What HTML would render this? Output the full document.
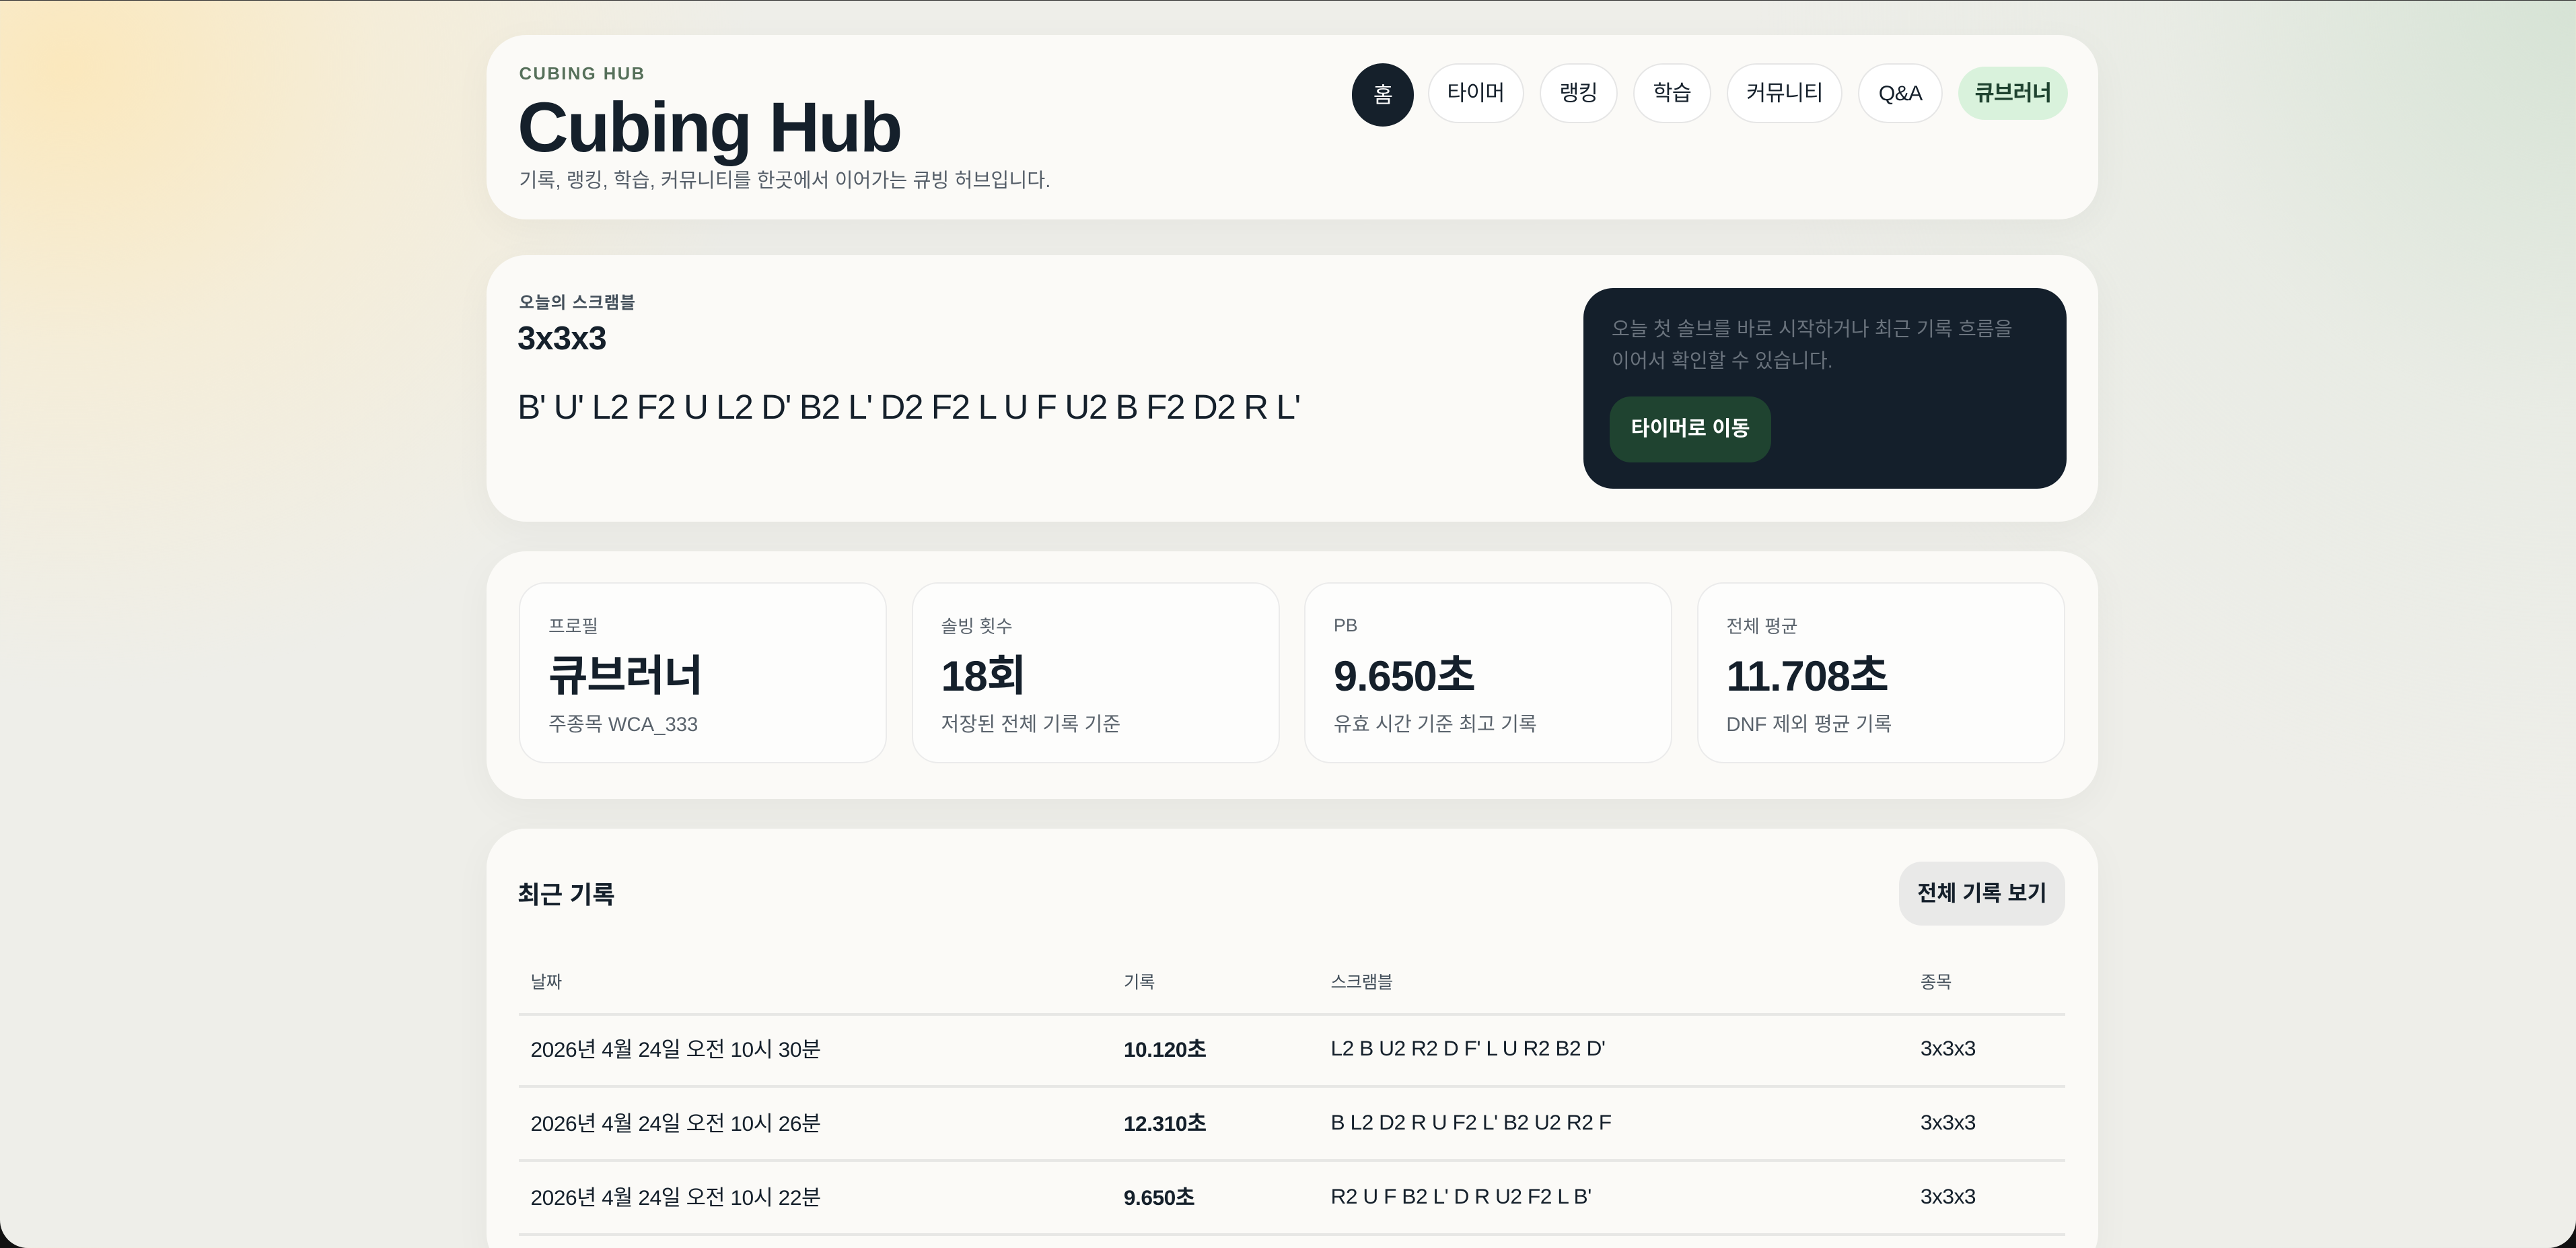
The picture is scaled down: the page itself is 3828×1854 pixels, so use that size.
<!DOCTYPE html>
<html><head><meta charset="utf-8"><style>
html,body{margin:0;padding:0;}
body{width:3828px;height:1854px;overflow:hidden;background:#111;}
#z{zoom:2.44133;width:1568px;height:759.5px;position:relative;overflow:hidden;border-radius:0 0 17px 17px;border-top:0.5px solid #333;box-sizing:border-box;
background:radial-gradient(ellipse 420px 380px at 40px 40px,#fbe8bd 0%,rgba(251,236,200,.5) 45%,rgba(240,240,234,0) 100%),radial-gradient(ellipse 500px 500px at 1568px 0px,#d6e3d5 0%,rgba(225,232,222,.4) 50%,rgba(238,238,233,0) 100%),#eeeee9;
font-family:"Liberation Sans","Noto Sans CJK KR",sans-serif;color:#15202b;}
.card{position:absolute;left:296px;width:981px;background:#fbfaf7;border-radius:24px;box-shadow:0 6px 24px rgba(0,0,0,.04);}
.a{position:absolute;white-space:nowrap;}
.pill{position:absolute;top:17px;height:35px;border:1px solid #e6e6e6;border-radius:20px;background:#fff;font-size:13px;line-height:35px;text-align:center;letter-spacing:-0.3px;}
.st{position:absolute;top:19px;width:224px;height:110px;border:1px solid #ebebeb;border-radius:16px;background:#fdfdfc;box-sizing:border-box;}
.st .l{position:absolute;left:17px;top:17px;font-size:11px;color:#5a636c;}
.st .v{position:absolute;left:17px;top:35px;font-size:26px;font-weight:bold;letter-spacing:-0.5px;}
.st .s{position:absolute;left:17px;top:76px;font-size:12px;color:#5a636c;}
.hl{position:absolute;left:20px;right:20px;height:1.5px;background:#e7e7e5;}
.r{position:absolute;font-size:13px;letter-spacing:-0.2px;}
</style></head><body><div id="z">
<div class="card" style="top:21px;height:112px;">
 <div class="a" style="left:20px;top:18px;font-size:10.5px;font-weight:bold;letter-spacing:1px;color:#56705a;">CUBING HUB</div>
 <div class="a" style="left:19px;top:32px;font-size:43px;font-weight:bold;letter-spacing:-1px;">Cubing Hub</div>
 <div class="a" style="left:20px;top:79px;font-size:12px;color:#555e68;">기록, 랭킹, 학습, 커뮤니티를 한곳에서 이어가는 큐빙 허브입니다.</div>
 <div class="pill" style="left:527px;width:36px;height:37px;background:#15202b;border-color:#15202b;color:#fff;line-height:37px;">홈</div>
 <div class="pill" style="left:573px;width:57px;">타이머</div>
 <div class="pill" style="left:641px;width:46px;">랭킹</div>
 <div class="pill" style="left:698px;width:46px;">학습</div>
 <div class="pill" style="left:755px;width:69px;">커뮤니티</div>
 <div class="pill" style="left:835px;width:50px;">Q&amp;A</div>
 <div class="pill" style="left:896px;width:65px;top:19px;height:31px;line-height:31px;background:#d9f2dc;border-color:#d9f2dc;color:#1f4330;font-weight:bold;">큐브러너</div>
</div>
<div class="card" style="top:155px;height:162px;">
 <div class="a" style="left:20px;top:21px;font-size:10px;font-weight:bold;letter-spacing:0.5px;color:#44505b;">오늘의 스크램블</div>
 <div class="a" style="left:19px;top:39px;font-size:20px;font-weight:bold;letter-spacing:-0.3px;">3x3x3</div>
 <div class="a" style="left:19px;top:80px;font-size:21px;letter-spacing:-0.6px;">B' U' L2 F2 U L2 D' B2 L' D2 F2 L U F U2 B F2 D2 R L'</div>
 <div style="position:absolute;left:668px;top:20px;width:294px;height:122px;background:#141f2b;border-radius:18px;">
  <div class="a" style="left:17px;top:16px;font-size:12px;line-height:19px;color:#6a737d;white-space:normal;width:250px;">오늘 첫 솔브를 바로 시작하거나 최근 기록 흐름을 이어서 확인할 수 있습니다.</div>
  <div style="position:absolute;left:16px;top:66px;width:98px;height:40px;background:#1f4330;border-radius:13px;color:#fff;font-weight:bold;font-size:12.5px;line-height:40px;text-align:center;">타이머로 이동</div>
 </div>
</div>
<div class="card" style="top:335px;height:151px;">
 <div class="st" style="left:20px;"><div class="l">프로필</div><div class="v">큐브러너</div><div class="s">주종목 WCA_333</div></div>
 <div class="st" style="left:259px;"><div class="l">솔빙 횟수</div><div class="v">18회</div><div class="s">저장된 전체 기록 기준</div></div>
 <div class="st" style="left:498px;"><div class="l" style="top:19px">PB</div><div class="v">9.650초</div><div class="s">유효 시간 기준 최고 기록</div></div>
 <div class="st" style="left:737px;"><div class="l">전체 평균</div><div class="v">11.708초</div><div class="s">DNF 제외 평균 기록</div></div>
</div>
<div class="card" style="top:504px;height:270px;">
 <div class="a" style="left:19px;top:28px;font-size:15px;font-weight:bold;">최근 기록</div>
 <div style="position:absolute;left:860px;top:20px;width:101px;height:39px;background:#e9e9e8;border-radius:14px;font-size:13px;font-weight:bold;line-height:39px;text-align:center;">전체 기록 보기</div>
 <div class="r" style="left:27px;top:85px;font-size:10.5px;color:#44505b;">날짜</div>
 <div class="r" style="left:388px;top:85px;font-size:10.5px;color:#44505b;">기록</div>
 <div class="r" style="left:514px;top:85px;font-size:10.5px;color:#44505b;">스크램블</div>
 <div class="r" style="left:873px;top:85px;font-size:10.5px;color:#44505b;">종목</div>
 <div class="hl" style="top:112px;"></div>
 <div class="r" style="left:27px;top:124px;">2026년 4월 24일 오전 10시 30분</div>
 <div class="r" style="left:388px;top:124px;font-weight:bold;">10.120초</div>
 <div class="r" style="left:514px;top:126px;">L2 B U2 R2 D F' L U R2 B2 D'</div>
 <div class="r" style="left:873px;top:126px;">3x3x3</div>
 <div class="hl" style="top:156px;"></div>
 <div class="r" style="left:27px;top:169px;">2026년 4월 24일 오전 10시 26분</div>
 <div class="r" style="left:388px;top:169px;font-weight:bold;">12.310초</div>
 <div class="r" style="left:514px;top:171px;">B L2 D2 R U F2 L' B2 U2 R2 F</div>
 <div class="r" style="left:873px;top:171px;">3x3x3</div>
 <div class="hl" style="top:201px;"></div>
 <div class="r" style="left:27px;top:214px;">2026년 4월 24일 오전 10시 22분</div>
 <div class="r" style="left:388px;top:214px;font-weight:bold;">9.650초</div>
 <div class="r" style="left:514px;top:216px;">R2 U F B2 L' D R U2 F2 L B'</div>
 <div class="r" style="left:873px;top:216px;">3x3x3</div>
 <div class="hl" style="top:246px;"></div>
</div>
</div></body></html>
